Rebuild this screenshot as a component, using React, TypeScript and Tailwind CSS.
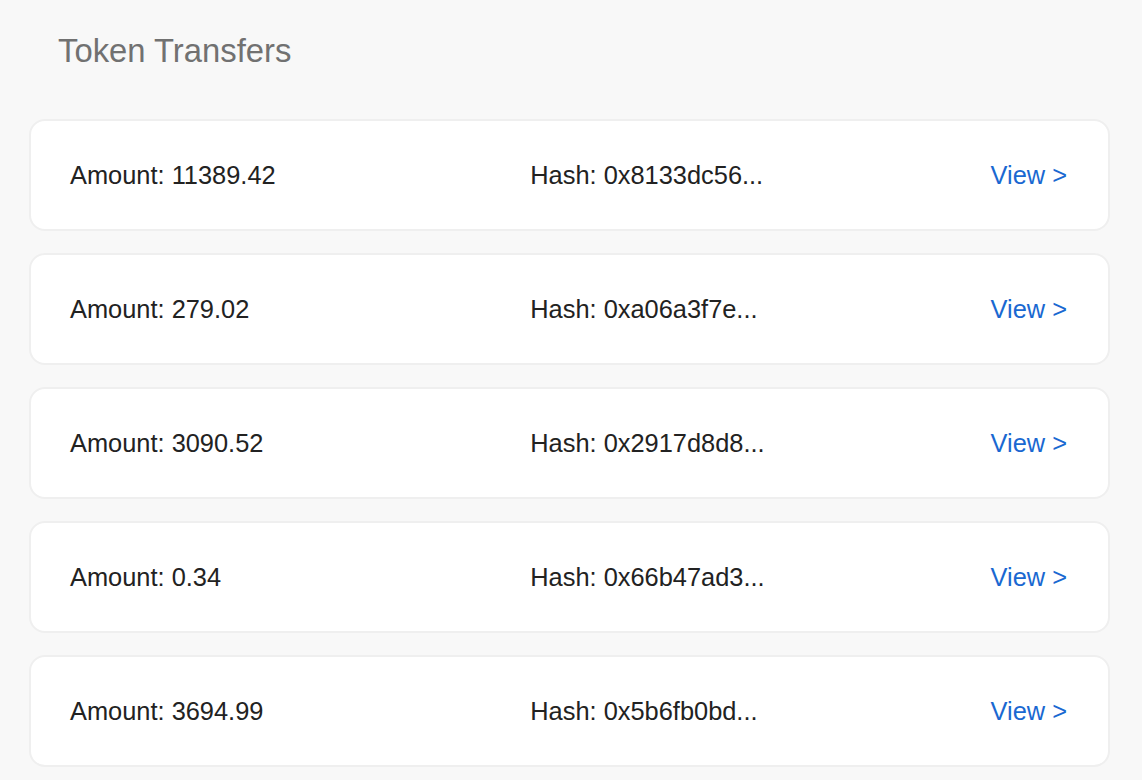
const transfers = [
  { amount: "11389.42", hash: "0x8133dc56..." },
  { amount: "279.02", hash: "0xa06a3f7e..." },
  { amount: "3090.52", hash: "0x2917d8d8..." },
  { amount: "0.34", hash: "0x66b47ad3..." },
  { amount: "3694.99", hash: "0x5b6fb0bd..." },
];

const TransferRow = ({ amount, hash }: { amount: string; hash: string }) => {
  return (
    <div className="flex h-[112px] items-center rounded-[16px] border-2 border-[#efefef] bg-white pr-[41px] pl-[39px] text-[25.4px] text-[#222]">
      <span className="flex-1">Amount: {amount}</span>
      <span className="flex-1">Hash: {hash}</span>
      <a href="#" className="text-[#1a68d1]">
        View &gt;
      </a>
    </div>
  );
};

export default function App() {
  return (
    <div
      className="min-h-screen bg-[#f8f8f8] px-[29px] pt-[31px]"
      style={{ fontFamily: '"Liberation Sans", Arial, sans-serif' }}
    >
      <h1 className="ml-[29px] text-[32.8px] leading-[1.2] text-[#717171]">
        Token Transfers
      </h1>
      <div className="mt-[49px] flex w-[1081px] flex-col gap-[22px]">
        {transfers.map((t) => (
          <TransferRow key={t.hash} amount={t.amount} hash={t.hash} />
        ))}
      </div>
    </div>
  );
}
